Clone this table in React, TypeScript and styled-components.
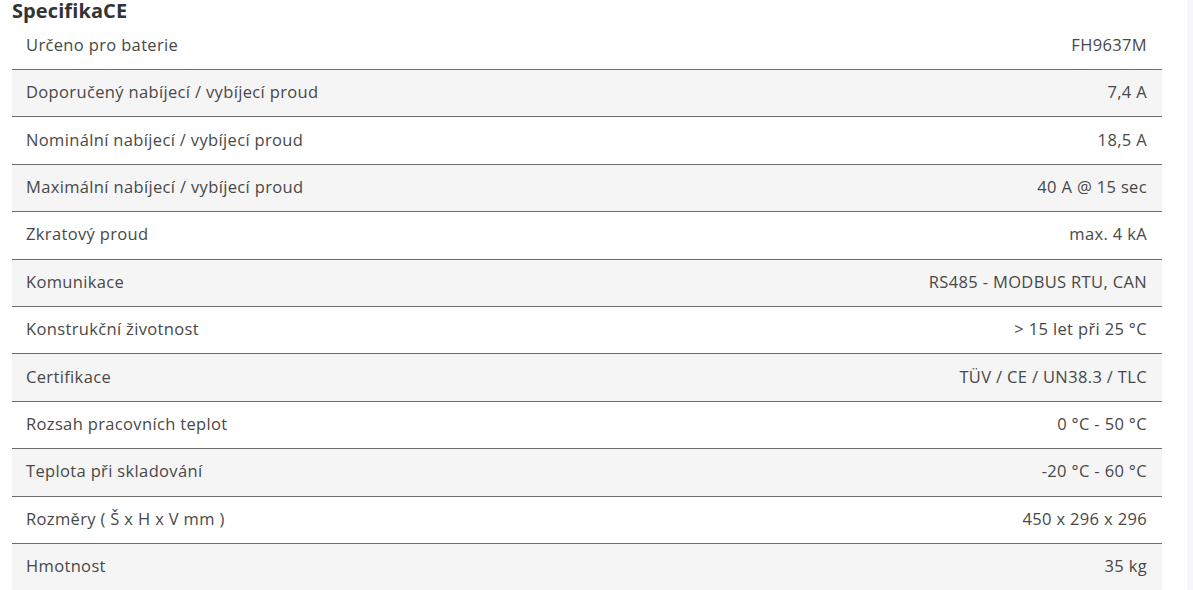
import React from "react";
import styled, { createGlobalStyle } from "styled-components";

const GlobalStyle = createGlobalStyle`
  html, body { margin: 0; padding: 0; background: #fff; }
  body { font-family: "Open Sans", "Liberation Sans", sans-serif; color: #444; }
`;

const Page = styled.div`
  display: grid;
  grid-template-columns: 12px 1150px 25px 6px;
  height: 590px;
  overflow: hidden;
`;

const Side = styled.div`
  background: #f4f7fd;
  grid-column: 4;
  grid-row: 1;
`;

const Content = styled.section`
  grid-column: 2;
  grid-row: 1;
`;

const Title = styled.h3`
  margin: 0;
  font-size: 20px;
  font-weight: 700;
  line-height: 22.6px;
  color: #333;
  letter-spacing: 0.1px;
`;

const Table = styled.div`
  display: flex;
  flex-direction: column;
`;

const Row = styled.div<{ $alt: boolean }>`
  display: flex;
  justify-content: space-between;
  align-items: center;
  box-sizing: content-box;
  height: 43.4px;
  padding: 0 15px 3px 14px;
  background: ${(p) => (p.$alt ? "#f5f5f5" : "#fff")};
  border-bottom: 1px solid #6b6b6b;
  font-size: 16.5px;
  letter-spacing: 0.35px;
  color: #484848;
  &:last-child { border-bottom: none; }
`;

const Label = styled.span``;
const Value = styled.span`
  text-align: right;
`;

const rows: [string, string][] = [
  ["Určeno pro baterie", "FH9637M"],
  ["Doporučený nabíjecí / vybíjecí proud", "7,4 A"],
  ["Nominální nabíjecí / vybíjecí proud", "18,5 A"],
  ["Maximální nabíjecí / vybíjecí proud", "40 A @ 15 sec"],
  ["Zkratový proud", "max. 4 kA"],
  ["Komunikace", "RS485 - MODBUS RTU, CAN"],
  ["Konstrukční životnost", "> 15 let při 25 °C"],
  ["Certifikace", "TÜV / CE / UN38.3 / TLC"],
  ["Rozsah pracovních teplot", "0 °C - 50 °C"],
  ["Teplota při skladování", "-20 °C - 60 °C"],
  ["Rozměry ( Š x H x V mm )", "450 x 296 x 296"],
  ["Hmotnost", "35 kg"],
];

export default function App() {
  return (
    <>
      <GlobalStyle />
      <Page>
        <Content>
          <Title>SpecifikaCE</Title>
          <Table>
            {rows.map(([l, v], i) => (
              <Row key={l} $alt={i % 2 === 1}>
                <Label>{l}</Label>
                <Value>{v}</Value>
              </Row>
            ))}
          </Table>
        </Content>
        <Side />
      </Page>
    </>
  );
}
